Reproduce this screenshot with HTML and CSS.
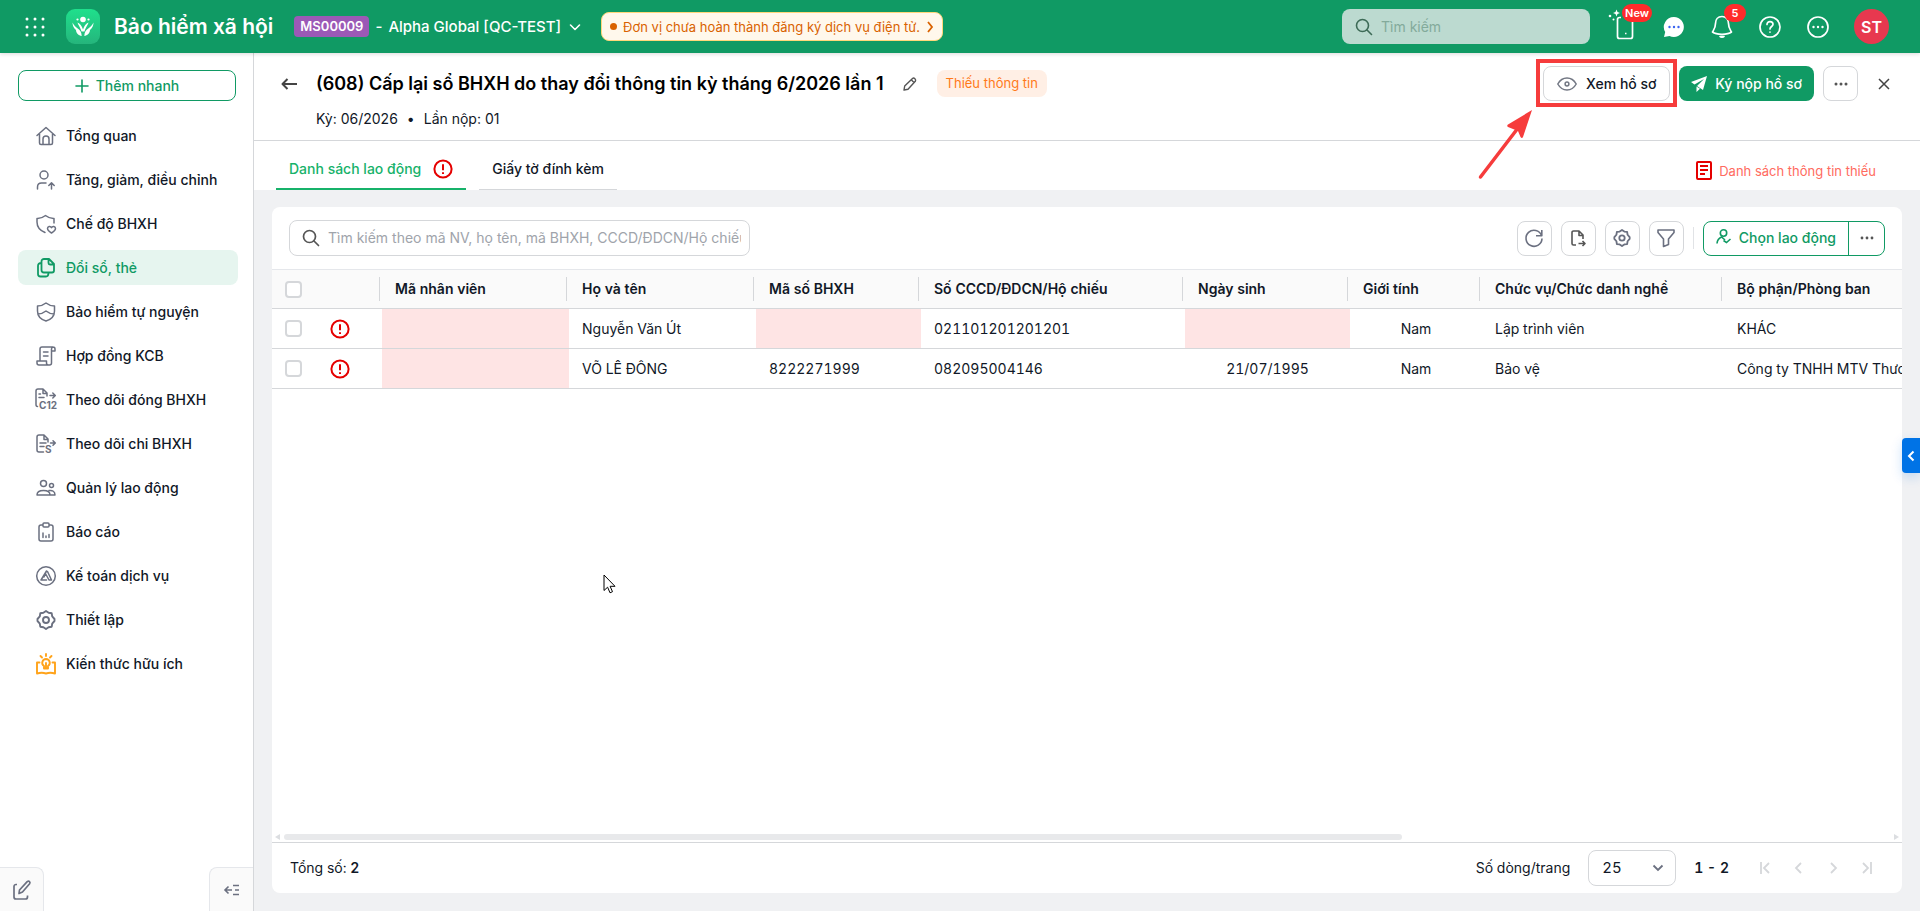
FILE: index.html
```html
<!DOCTYPE html>
<html lang="vi">
<head>
  <meta charset="UTF-8">
  <meta name="viewport" content="width=device-width, initial-scale=1.0">
  <title>Bảo hiểm xã hội</title>
  <link rel="stylesheet" href="styles.css">
</head>
<body>
  <!-- Top bar -->
  <header class="topbar">
    <button class="icon-btn apps" aria-label="Ứng dụng">
      <svg width="20" height="24" viewBox="0 0 20 24" fill="#fff"><circle cx="2" cy="3" r="1.5"/><circle cx="10" cy="3" r="1.5"/><circle cx="18" cy="3" r="1.5"/><circle cx="2" cy="11" r="1.5"/><circle cx="10" cy="11" r="1.5"/><circle cx="18" cy="11" r="1.5"/><circle cx="2" cy="19" r="1.5"/><circle cx="10" cy="19" r="1.5"/><circle cx="18" cy="19" r="1.5"/></svg>
    </button>
    <div class="logo">
      <svg width="22" height="22" viewBox="0 0 22 22" fill="#fff"><circle cx="11" cy="3.500" r="2.800"/><circle cx="5.500" cy="3.500" r="1.100"/><circle cx="16.500" cy="3.500" r="1.100"/><path d="M.5 6.500c1.500 3 3 4.500 5.200 6 2.300 1.600 3.800 3.500 4 7.500-3.200-.8-5.500-2.500-5.700-6C1.800 12 .5 9.500.5 6.500zM21.500 6.500c-1.500 3-3 4.500-5.200 6-2.300 1.600-3.800 3.500-4 7.500 3.200-.8 5.500-2.500 5.700-6 2.200-2 3.500-4.500 3.500-7.500zM5.500 6.500c2.500 1 4.300 3.500 5.500 7 1.200-3.500 3-6 5.500-7-.8 3-2.500 4-4 9h-3c-1.500-5-3.200-6-4-9z"/></svg>
    </div>
    <h1 class="brand">Bảo hiểm xã hội</h1>
    <button class="company">
      <span class="company-code">MS00009</span>
      <span>-</span>
      <span>Alpha Global [QC-TEST]</span>
      <svg width="12" height="12" viewBox="0 0 12 12" fill="none" stroke="#fff" stroke-width="1.600" stroke-linecap="round" stroke-linejoin="round"><path d="M1.500 4l4.500 4.500L10.500 4"/></svg>
    </button>
    <a class="notice" href="#">
      <span class="notice-dot"></span>
      <span>Đơn vị chưa hoàn thành đăng ký dịch vụ điện tử.</span>
      <svg width="8" height="12" viewBox="0 0 8 12" fill="none" stroke="#d96200" stroke-width="1.800"><path d="M2 1l4 5-4 5"/></svg>
    </a>
    <div class="topbar-right">
      <label class="top-search">
        <svg width="18" height="18" viewBox="0 0 18 18" fill="none" stroke="#3d6b57" stroke-width="1.600" stroke-linecap="round"><circle cx="7.500" cy="7.500" r="6"/><path d="M12 12l4.500 4.500"/></svg>
        <input type="text" placeholder="Tìm kiếm" aria-label="Tìm kiếm">
      </label>
      <button class="icon-btn" aria-label="Mới">
        <svg width="28" height="28" viewBox="4 0 28 28" fill="none" stroke="#fff" stroke-width="1.700"><path d="M13 4.500h-1.500a2 2 0 0 0-2 2v17a2 2 0 0 0 2 2h11a2 2 0 0 0 2-2V8M17 20.500h1.500"/><path d="M8.500-3.500l1 2.500L12 0 9.500 1l-1 2.500L7.500 1 5 0l2.500-1z" fill="#fff" stroke="none"/><circle cx="2" cy="3" r="1.300" fill="#fff" stroke="none"/><circle cx="5.500" cy="6.500" r="1" fill="#fff" stroke="none"/></svg>
        <span class="badge badge-new">New</span>
      </button>
      <button class="icon-btn" aria-label="Tin nhắn">
        <svg width="24" height="24" viewBox="0 0 24 24"><path d="M12 2a10 10 0 1 1-4.500 19L2 22l1.200-5A10 10 0 0 1 12 2z" fill="#fff"/><g fill="#3a63f0"><circle cx="7.500" cy="12" r="1.200"/><circle cx="12" cy="12" r="1.200"/><circle cx="16.500" cy="12" r="1.200"/></g></svg>
      </button>
      <button class="icon-btn" aria-label="Thông báo">
        <svg width="24" height="24" viewBox="0 0 24 24" fill="none" stroke="#fff" stroke-width="1.700" stroke-linejoin="round"><path d="M12 1.500c-4.200 0-6.500 3-6.500 7 0 4.500-1.500 6-3 8.500 2 1.600 5.500 2.300 9.500 2.300s7.500-.7 9.500-2.300c-1.500-2.500-3-4-3-8.500 0-4-2.300-7-6.500-7zM10 21.500c.8.900 3.200.9 4 0z"/></svg>
        <span class="badge">5</span>
      </button>
      <button class="icon-btn" aria-label="Trợ giúp">
        <svg width="24" height="24" viewBox="0 0 24 24" fill="none" stroke="#fff" stroke-width="1.700" stroke-linecap="round"><circle cx="12" cy="12" r="10"/><path d="M9 9.500c0-1.700 1.300-2.900 3-2.900s3 1.200 3 2.700c0 2.200-3 2.200-3 4.700M12 17v.1"/></svg>
      </button>
      <button class="icon-btn" aria-label="Khác">
        <svg width="24" height="24" viewBox="0 0 24 24" fill="none" stroke="#fff" stroke-width="1.700"><circle cx="12" cy="12" r="10"/><g fill="#fff" stroke="none"><circle cx="7.500" cy="12" r="1.200"/><circle cx="12" cy="12" r="1.200"/><circle cx="16.500" cy="12" r="1.200"/></g></svg>
      </button>
      <button class="avatar">ST</button>
    </div>
  </header>

  <div class="layout">
    <!-- Sidebar -->
    <aside class="sidebar">
      <button class="btn-add">
        <svg width="14" height="14" viewBox="0 0 14 14" stroke="#109a64" stroke-width="1.600" stroke-linecap="round"><path d="M7 1v12M1 7h12"/></svg>
        Thêm nhanh
      </button>
      <nav class="menu">
        <a class="menu-item" href="#">
          <svg class="menu-icon" viewBox="0 0 20 20"><path d="M1 9.500L10 1.500l9 8M3.500 8v9a1.500 1.500 0 0 0 1.500 1.500h10a1.500 1.500 0 0 0 1.500-1.500V8M7 18v-5a3 3 0 0 1 6 0v5"/></svg>
          Tổng quan
        </a>
        <a class="menu-item" href="#">
          <svg class="menu-icon" viewBox="0 0 20 20"><circle cx="8" cy="5" r="4"/><path d="M1.500 19v-2c0-2.500 1.500-4 4-4H10M15.500 19v-6M12.800 15.500l2.700-2.700 2.700 2.700"/></svg>
          Tăng, giảm, điều chỉnh
        </a>
        <a class="menu-item" href="#">
          <svg class="menu-icon" viewBox="0 0 20 20"><path d="M18 9V4.500c-3.500.2-6-1-8.500-3C7 3.500 4.500 4.700 1 4.500V8c0 5 3 8.500 8 10.500M15.500 19c-2.500-1.600-4-2.800-4-4.500 0-2.200 3-2.800 4-.8 1-2 4-1.400 4 .8 0 1.700-1.500 2.900-4 4.500z"/></svg>
          Chế độ BHXH
        </a>
        <a class="menu-item active" href="#">
          <svg class="menu-icon" viewBox="0 0 20 20"><path d="M8 1h5l5 5v6.500a2 2 0 0 1-2 2H8a2.500 2.500 0 0 1-2.500-2.500V3.500A2.500 2.500 0 0 1 8 1zM12.500 1.500V5a1.500 1.500 0 0 0 1.500 1.500h3.500M5.500 5C3 5 2 6 2 8v8a2.500 2.500 0 0 0 2.500 2.500H10c1.500 0 2.500-1 2.500-4"/></svg>
          Đổi sổ, thẻ
        </a>
        <a class="menu-item" href="#">
          <svg class="menu-icon" viewBox="0 0 20 20"><path d="M10 1c2.500 2 5.500 3 8.500 3v5c0 5-3.500 8.500-8.500 10C5 17.500 1.500 14 1.500 9V4c3 0 6-1 8.500-3zM1.800 12C5 12 7.500 11 10 9c2.500 2 5 3 8.200 3"/></svg>
          Bảo hiểm tự nguyện
        </a>
        <a class="menu-item" href="#">
          <svg class="menu-icon" viewBox="0 0 20 20"><path d="M15.500 5V17a2 2 0 0 1-2 2H3a2 2 0 0 1-2-2v-2h9.500v2a2 2 0 0 0 2 2M4 15V3a2 2 0 0 1 2-2h11a2 2 0 0 1 2 2v2h-3.500V3a2 2 0 0 1 1.500-2M7.500 6H12M7.500 10H12"/></svg>
          Hợp đồng KCB
        </a>
        <a class="menu-item" href="#">
          <svg class="menu-icon" viewBox="0 0 20 20"><path d="M1.500 16.500Q0 16.500 0 14.500V1Q0-1 2-1h5l4 4v3M7-1v4.500h4M3 4h1.500M3 7.500h5M14 5.500h5M16.800 3l2.500 2.500L16.800 8"/><text x="3" y="19">C12</text></svg>
          Theo dõi đóng BHXH
        </a>
        <a class="menu-item" href="#">
          <svg class="menu-icon" viewBox="0 0 20 20"><path d="M7.500 18H3q-2 0-2-2V3Q1 1 3 1h5l4 4v3M8 1v4.500h4M4 9h6M4 12.500h4M14.500 9h4.500M17 6.700l2.300 2.300-2.300 2.300"/><text x="9" y="19">S</text></svg>
          Theo dõi chi BHXH
        </a>
        <a class="menu-item" href="#">
          <svg class="menu-icon" viewBox="0 0 20 20"><circle cx="7.500" cy="5.500" r="3"/><circle cx="15.500" cy="7.500" r="2"/><path d="M1 17c0-3 2.500-4.500 6.500-4.500S14 14 14 17zM13 12.500c3.500-.5 6 1 6 4.500h-5"/></svg>
          Quản lý lao động
        </a>
        <a class="menu-item" href="#">
          <svg class="menu-icon" viewBox="0 0 20 20"><path d="M7 3H5a2 2 0 0 0-2 2v12a2 2 0 0 0 2 2h10a2 2 0 0 0 2-2V5a2 2 0 0 0-2-2h-2M8 1h4a1 1 0 0 1 1 1v2a1 1 0 0 1-1 1H8a1 1 0 0 1-1-1V2a1 1 0 0 1 1-1zM7 11v4.500M10 14v1.500M13 12.500v3"/></svg>
          Báo cáo
        </a>
        <a class="menu-item" href="#">
          <svg class="menu-icon" viewBox="0 0 20 20"><circle cx="10" cy="10" r="9.300"/><path d="M10.500 5L5 14h5.500M10.500 5L8 11M11.500 5.500L15.500 14H13L10 8.500"/></svg>
          Kế toán dịch vụ
        </a>
        <a class="menu-item" href="#">
          <svg class="menu-icon bold" viewBox="0 0 20 20"><path d="M10 1l2.600 1.800 3.100.5.500 3.100L18.500 9v2l-2.300 2.600-.5 3.100-3.100.5L10 19l-2.600-1.800-3.100-.5-.5-3.100L1.500 11V9l2.300-2.600.5-3.100 3.100-.5z"/><circle cx="10" cy="10" r="3"/></svg>
          Thiết lập
        </a>
        <a class="menu-item" href="#">
          <svg class="menu-icon knowledge" viewBox="0 0 20 20"><path d="M3.500 8.500H1v11c3.500-1 6-1 9 0 3-1 5.500-1 9 0v-11h-2.500M10 5a3.800 3.800 0 0 1 2 7v2.500H8V12a3.800 3.800 0 0 1 2-7zM10 0v2M4.500 2L6 3.500M15.500 2L14 3.500M10 9v5"/></svg>
          Kiến thức hữu ích
        </a>
      </nav>
      <div class="sidebar-footer">
        <button class="corner-btn corner-left" aria-label="Góp ý">
          <svg width="18" height="20" viewBox="0 0 18 20" fill="none" stroke="#6b7080" stroke-width="1.700" stroke-linejoin="round"><path d="M4 4.500H3a2 2 0 0 0-2 2V17a2 2 0 0 0 2 2h9.500a2 2 0 0 0 2-2v-1.500M6 13.500l.5-3.500 7.700-8.300c1.800-1.400 3.500.3 2.400 2L9.500 12z"/></svg>
        </button>
        <button class="corner-btn corner-right" aria-label="Thu gọn">
          <svg width="16" height="12" viewBox="0 0 16 12" fill="none" stroke="#6b7080" stroke-width="1.600"><path d="M9 1.500h6M9 10.500h6M1 6h7M11 6h4M4.500 2.500L1 6l3.500 3.500"/></svg>
        </button>
      </div>
    </aside>

    <main class="main">
      <!-- Record header -->
      <section class="record-head">
        <button class="icon-btn back" aria-label="Quay lại">
          <svg width="16" height="12" viewBox="0 0 16 12" fill="none" stroke="#444" stroke-width="2" stroke-linejoin="round"><path d="M16 6H1.500M6.500 1l-5 5 5 5"/></svg>
        </button>
        <div class="record-info">
          <div class="record-title">
            <h2>(608) Cấp lại sổ BHXH do thay đổi thông tin kỳ tháng 6/2026 lần 1</h2>
            <button class="icon-btn edit" aria-label="Sửa">
              <svg width="14" height="14" viewBox="0 0 14 14" fill="none" stroke="#555" stroke-width="1.400" stroke-linejoin="round"><path d="M1 13l.7-4L9.500 1.500c1.500-1.300 4 1 2.800 2.800L5 12.200zM8.500 3l2.500 2.500"/></svg>
            </button>
            <span class="tag">Thiếu thông tin</span>
          </div>
          <p class="record-meta"><span>Kỳ: 06/2026</span><span>•</span><span>Lần nộp: 01</span></p>
        </div>
        <div class="record-actions">
          <div class="highlighted">
            <button class="btn btn-view">
              <svg width="20" height="14" viewBox="0 0 20 14" fill="none" stroke="#737884" stroke-width="1.500"><path d="M.8 7C3 3 6.300 1 10 1s7 2 9.200 6C17 11 13.700 13 10 13S3 11 .8 7z"/><circle cx="10" cy="7" r="1.900"/></svg>
              Xem hồ sơ
            </button>
            <svg class="pointer-arrow" width="56" height="72" viewBox="0 0 56 72"><path d="M2.500 66L40 17" stroke="#f63c3c" stroke-width="3.500" stroke-linecap="round"/><path d="M54-1L45 26q-1 2-2.500 0L40 20l-10-4q-1.500-1.500 0-2.500z" fill="#f63c3c"/></svg>
          </div>
          <button class="btn btn-submit">
            <svg width="16" height="16" viewBox="0 0 16 16" fill="#fff"><path d="M16 0L0 6l3.500 2.500L13 3 6 10l6 4zM5.500 10.500L9 12.800 5.500 16z"/></svg>
            Ký nộp hồ sơ
          </button>
          <button class="square-btn" aria-label="Thêm">
            <svg width="16" height="4" viewBox="0 0 16 4" fill="#555"><circle cx="3" cy="2" r="1.500"/><circle cx="8" cy="2" r="1.500"/><circle cx="13" cy="2" r="1.500"/></svg>
          </button>
          <button class="icon-btn close" aria-label="Đóng">
            <svg width="12" height="12" viewBox="0 0 12 12" stroke="#444" stroke-width="1.500"><path d="M1 1l10 10M11 1L1 11"/></svg>
          </button>
        </div>
      </section>

      <!-- Tabs -->
      <section class="tabs">
        <button class="tab active">
          Danh sách lao động
          <svg class="warn" viewBox="0 0 20 20"><circle cx="10" cy="10" r="8.600"/><path d="M10 5.200v6M10 13.200v1.800"/></svg>
        </button>
        <button class="tab">Giấy tờ đính kèm</button>
        <a class="missing-link" href="#">
          <svg width="16" height="19" viewBox="0 0 16 19" fill="none" stroke="#e50000" stroke-width="2"><rect x="1" y="1" width="14" height="17" rx="1"/><path d="M4 5h8M4 9h8M4 13h5"/></svg>
          Danh sách thông tin thiếu
        </a>
      </section>

      <!-- Employee list -->
      <section class="content">
        <div class="card">
          <div class="toolbar">
            <label class="search">
              <svg width="18" height="18" viewBox="0 0 18 18" fill="none" stroke="#555" stroke-width="1.700" stroke-linecap="round"><circle cx="7.500" cy="7.500" r="6"/><path d="M12 12l4.500 4.500"/></svg>
              <input type="text" placeholder="Tìm kiếm theo mã NV, họ tên, mã BHXH, CCCD/ĐDCN/Hộ chiếu" aria-label="Tìm kiếm nhân viên">
            </label>
            <div class="toolbar-right">
              <button class="square-btn" aria-label="Tải lại">
                <svg class="tool-icon" viewBox="0 0 18 18"><path d="M16.500 6.500A8 8 0 1 0 17 9.500M16.800 1v5.700H11"/></svg>
              </button>
              <button class="square-btn" aria-label="Xuất khẩu">
                <svg class="tool-icon dark" viewBox="0 0 18 18"><path d="M7 16H4.500A1.500 1.500 0 0 1 3 14.500v-11A1.500 1.500 0 0 1 4.500 2H10l4 4v4M10 2v4.500h4M9.500 14.500H16M13.500 12l2.500 2.500-2.500 2.500"/></svg>
              </button>
              <button class="square-btn" aria-label="Thiết lập cột">
                <svg class="tool-icon gear" viewBox="0 0 20 20"><path d="M10 1l2.600 1.800 3.100.5.500 3.100L18.500 9v2l-2.300 2.600-.5 3.100-3.100.5L10 19l-2.600-1.800-3.100-.5-.5-3.100L1.500 11V9l2.300-2.600.5-3.100 3.100-.5z"/><circle cx="10" cy="10" r="3"/></svg>
              </button>
              <button class="square-btn" aria-label="Bộ lọc">
                <svg class="tool-icon" viewBox="0 0 18 18"><path d="M1 1h16v2.500L11.500 10v5.500L6.500 17.500V10L1 3.500z"/></svg>
              </button>
              <span class="divider"></span>
              <div class="split-btn">
                <button class="split-main">
                  <svg width="16" height="18" viewBox="0 0 16 18" fill="none" stroke="#109a64" stroke-width="1.600"><circle cx="7.500" cy="4" r="3.200"/><path d="M1 14.500c.3-3.500 2-5.500 4.500-6.500l3.500 3M7.500 11.500l3 2 4-3.500"/></svg>
                  Chọn lao động
                </button>
                <button class="split-more" aria-label="Thêm">
                  <svg width="16" height="4" viewBox="0 0 16 4" fill="#555"><circle cx="3" cy="2" r="1.400"/><circle cx="8" cy="2" r="1.400"/><circle cx="13" cy="2" r="1.400"/></svg>
                </button>
              </div>
            </div>
          </div>

          <div class="table-wrap">
            <table class="grid">
              <colgroup>
                <col class="col-check"><col class="col-warn"><col class="col-code"><col class="col-name"><col class="col-bhxh"><col class="col-cccd"><col class="col-birth"><col class="col-sex"><col class="col-job"><col class="col-dept">
              </colgroup>
              <thead>
                <tr>
                  <th class="check"><input type="checkbox" aria-label="Chọn tất cả"></th>
                  <th class="sep" aria-label="Cảnh báo"></th>
                  <th class="sep">Mã nhân viên</th>
                  <th class="sep">Họ và tên</th>
                  <th class="sep">Mã số BHXH</th>
                  <th class="sep">Số CCCD/ĐDCN/Hộ chiếu</th>
                  <th class="sep">Ngày sinh</th>
                  <th class="sep">Giới tính</th>
                  <th class="sep">Chức vụ/Chức danh nghề</th>
                  <th>Bộ phận/Phòng ban</th>
                </tr>
              </thead>
              <tbody>
                <tr>
                  <td class="check"><input type="checkbox" aria-label="Chọn Nguyễn Văn Út"></td>
                  <td class="status"><svg class="warn" viewBox="0 0 20 20"><circle cx="10" cy="10" r="8.600"/><path d="M10 5.200v6M10 13.200v1.800"/></svg></td>
                  <td class="missing"></td>
                  <td>Nguyễn Văn Út</td>
                  <td class="missing"></td>
                  <td>021101201201201</td>
                  <td class="missing"></td>
                  <td class="center">Nam</td>
                  <td>Lập trình viên</td>
                  <td>KHÁC</td>
                </tr>
                <tr>
                  <td class="check"><input type="checkbox" aria-label="Chọn VÕ LÊ ĐÔNG"></td>
                  <td class="status"><svg class="warn" viewBox="0 0 20 20"><circle cx="10" cy="10" r="8.600"/><path d="M10 5.200v6M10 13.200v1.800"/></svg></td>
                  <td class="missing"></td>
                  <td>VÕ LÊ ĐÔNG</td>
                  <td>8222271999</td>
                  <td>082095004146</td>
                  <td class="center">21/07/1995</td>
                  <td class="center">Nam</td>
                  <td>Bảo vệ</td>
                  <td>Công ty TNHH MTV Thương</td>
                </tr>
              </tbody>
            </table>
          </div>

          <div class="scrollbar">
            <svg width="5" height="6" viewBox="0 0 5 6" fill="#dcdee1"><path d="M5 0v6L0 3z"/></svg>
            <div class="scroll-track"><div class="scroll-thumb"></div></div>
            <svg width="5" height="6" viewBox="0 0 5 6" fill="#dcdee1"><path d="M0 0v6l5-3z"/></svg>
          </div>

          <div class="card-footer">
            <span>Tổng số: <b>2</b></span>
            <div class="paging">
              <label for="page-size">Số dòng/trang</label>
              <div class="select-wrap">
                <select id="page-size"><option>25</option><option>50</option><option>100</option></select>
                <svg width="12" height="8" viewBox="0 0 12 8" fill="none" stroke="#6b7080" stroke-width="1.800"><path d="M1.500 1.500L6 6l4.500-4.500"/></svg>
              </div>
              <b class="range">1 - 2</b>
              <div class="pager">
                <button class="icon-btn" aria-label="Trang đầu"><svg class="page-icon" viewBox="0 0 12 12"><path d="M2 0v12M10 1L5 6l5 5"/></svg></button>
                <button class="icon-btn" aria-label="Trang trước"><svg class="page-icon" viewBox="0 0 12 12"><path d="M8 1L3 6l5 5"/></svg></button>
                <button class="icon-btn" aria-label="Trang sau"><svg class="page-icon" viewBox="0 0 12 12"><path d="M4 1l5 5-5 5"/></svg></button>
                <button class="icon-btn" aria-label="Trang cuối"><svg class="page-icon" viewBox="0 0 12 12"><path d="M2 1l5 5-5 5M10 0v12"/></svg></button>
              </div>
            </div>
          </div>
        </div>
      </section>
    </main>
  </div>

  <button class="side-handle" aria-label="Mở trợ lý">
    <svg width="8" height="12" viewBox="0 0 8 12" fill="none" stroke="#fff" stroke-width="2"><path d="M6.500 1.500L2 6l4.500 4.500"/></svg>
  </button>
  <svg class="cursor" width="13" height="20" viewBox="0 0 13 20"><path d="M1 1v15.500l3.600-3.300 2.400 5.600 2.500-1.100-2.400-5.400H12z" fill="#fff" stroke="#000" stroke-width="1"/></svg>
</body>
</html>
```
FILE: styles.css
```css
* {
  margin: 0;
  padding: 0;
  box-sizing: border-box;
}

body {
  font-family: Inter, "Liberation Sans", sans-serif;
  font-size: 14px;
  line-height: 20px;
  color: #111827;
  height: 100vh;
  display: flex;
  flex-direction: column;
  overflow: hidden;
  background: white;
}

button,
input,
select {
  font: inherit;
  color: inherit;
}

button {
  background: none;
  border: none;
  cursor: pointer;
}

a {
  color: inherit;
  text-decoration: none;
}

svg {
  flex-shrink: 0;
  overflow: visible;
}

.icon-btn {
  position: relative;
  display: flex;
  align-items: center;
  justify-content: center;
}

/* Top bar */
.topbar {
  height: 53px;
  flex-shrink: 0;
  background: #109a64;
  color: white;
  display: flex;
  align-items: center;
  padding: 0 31px 0 24px;
  box-shadow: 0 1px 4px rgba(0,0,0,0.15);
  z-index: 2;
}

.apps {
  width: 22px;
  margin-right: 20px;
  padding-top: 2px;
}

.logo {
  width: 34px;
  height: 35px;
  border-radius: 9px;
  background: linear-gradient(180deg, #1fe08c 0%, #25b57c 100%);
  display: flex;
  align-items: center;
  justify-content: center;
  margin-right: 14px;
}

.brand {
  font-size: 21px;
  line-height: 28px;
  font-weight: 600;
}

.company {
  display: flex;
  align-items: center;
  gap: 6px;
  margin-left: 21px;
  font-size: 15px;
  font-weight: 500;
}

.company svg {
  margin-left: 2px;
}

.company-code {
  background: #9b59b6;
  border-radius: 4px;
  padding: 0 6px;
  height: 21px;
  font-size: 13px;
  font-weight: 600;
}

.notice {
  display: flex;
  align-items: center;
  gap: 6px;
  margin-left: 20px;
  height: 29px;
  padding: 0 8px;
  border: 1px solid #ffd77a;
  border-radius: 8px;
  background: #fff8ec;
  color: #d96200;
  font-size: 13px;
}

.notice-dot {
  width: 7px;
  height: 7px;
  border-radius: 50%;
  background: #d96200;
}

.topbar-right {
  margin-left: auto;
  display: flex;
  align-items: center;
  gap: 24px;
}

.topbar-right .icon-btn {
  width: 24px;
  height: 24px;
}

.top-search {
  width: 248px;
  height: 35px;
  border-radius: 8px;
  background: #bcdad0;
  display: flex;
  align-items: center;
  gap: 8px;
  padding: 0 13px;
}

.top-search input,
.search input {
  flex: 1;
  min-width: 0;
  border: none;
  outline: none;
  background: none;
}

.top-search input::placeholder {
  color: #83aa9b;
}

.badge {
  position: absolute;
  top: -11px;
  left: 14px;
  min-width: 22px;
  height: 18px;
  border-radius: 9px;
  background: #ff2b2b;
  color: white;
  font-size: 11px;
  line-height: 18px;
  font-weight: 600;
  text-align: center;
}

.badge-new {
  min-width: 30px;
  left: 8px;
}

.avatar {
  width: 35px;
  height: 35px;
  border-radius: 50%;
  background: #e8384f;
  color: white;
  font-size: 16px;
  font-weight: 600;
}

.layout {
  flex: 1;
  min-height: 0;
  display: flex;
}

/* Sidebar */
.sidebar {
  width: 254px;
  flex-shrink: 0;
  border-right: 1px solid #d5d7da;
  display: flex;
  flex-direction: column;
  padding-top: 17px;
}

.btn-add {
  height: 31px;
  margin: 0 17px 0 18px;
  border: 1px solid #109a64;
  border-radius: 8px;
  color: #109a64;
  font-weight: 500;
  display: flex;
  align-items: center;
  justify-content: center;
  gap: 7px;
}

.menu {
  display: flex;
  flex-direction: column;
  gap: 9px;
  padding: 17px 15px 0 18px;
}

.menu-item {
  height: 35px;
  display: flex;
  align-items: center;
  gap: 10px;
  padding-left: 18px;
  border-radius: 8px;
  font-weight: 500;
}

.menu-item.active {
  background: #e6f5ef;
  color: #109a64;
}

.menu-icon {
  width: 20px;
  height: 20px;
  fill: none;
  stroke: #6b7080;
  stroke-width: 1.5;
  stroke-linecap: round;
  stroke-linejoin: round;
}

.menu-icon.bold {
  stroke-width: 1.9;
}

.menu-icon text {
  fill: #6b7080;
  stroke: none;
  font-size: 10px;
  font-weight: 700;
}

.menu-item.active .menu-icon {
  stroke: #109a64;
  stroke-width: 1.8;
}

.menu-icon.knowledge {
  stroke: #ffa31a;
  stroke-width: 1.9;
}

.sidebar-footer {
  margin-top: auto;
  display: flex;
  justify-content: space-between;
}

.corner-btn {
  width: 44px;
  height: 44px;
  border: 1px solid #e5e7eb;
  border-bottom: none;
  background: #fafafa;
  display: flex;
  align-items: center;
  justify-content: center;
}

.corner-left {
  border-left: none;
  border-radius: 0 8px 0 0;
}

.corner-right {
  border-right: none;
  border-radius: 8px 0 0 0;
}

.main {
  flex: 1;
  min-width: 0;
  display: flex;
  flex-direction: column;
  background: #f0f1f3;
}

/* Record header */
.record-head {
  background: white;
  height: 88px;
  flex-shrink: 0;
  border-bottom: 1px solid #d5d7da;
  display: flex;
  align-items: flex-start;
  padding: 13px 28px 0 27px;
}

.back,
.close {
  width: 16px;
  height: 35px;
}

.record-info {
  margin-left: 19px;
}

.record-title {
  display: flex;
  align-items: center;
  height: 35px;
}

.record-title h2 {
  font-size: 18px;
  line-height: 24px;
  font-weight: 600;
  color: black;
}

.edit {
  margin-left: 19px;
}

.tag {
  margin-left: 20px;
  height: 27px;
  line-height: 27px;
  padding: 0 9px;
  border-radius: 8px;
  background: #ffefe5;
  color: #ff7a1a;
  font-size: 13px;
}

.record-meta {
  display: flex;
  gap: 9px;
  margin-top: 8px;
}

.record-actions {
  margin-left: auto;
  display: flex;
  align-items: center;
  gap: 9px;
}

.btn {
  height: 35px;
  display: flex;
  align-items: center;
  border-radius: 8px;
  font-weight: 500;
}

.btn-view {
  width: 127px;
  justify-content: center;
  gap: 9px;
  border: 1px solid #d5d7da;
  background: white;
}

.btn-submit {
  background: #109a64;
  color: white;
  gap: 8px;
  padding: 0 12px;
}

.highlighted {
  position: relative;
}

.highlighted::after {
  content: "";
  position: absolute;
  inset: -7px -7px -6px -7px;
  border: 4px solid #f63c3c;
  pointer-events: none;
}

.pointer-arrow {
  position: absolute;
  top: 45px;
  left: -65px;
  pointer-events: none;
}

.square-btn {
  width: 35px;
  height: 35px;
  border: 1px solid #d5d7da;
  border-radius: 8px;
  background: white;
  display: flex;
  align-items: center;
  justify-content: center;
}

.close {
  margin-left: 9px;
}

/* Tabs */
.tabs {
  background: white;
  height: 49px;
  flex-shrink: 0;
  display: flex;
  align-items: flex-end;
  gap: 13px;
  padding: 0 44px 0 22px;
}

.tab {
  height: 41px;
  padding: 0 13px;
  border-bottom: 1px solid #d5d7da;
  font-weight: 500;
  display: flex;
  align-items: center;
  gap: 12px;
}

.tab.active {
  color: #17b26a;
  border-bottom: 2px solid #17b26a;
}

.warn {
  width: 20px;
  height: 20px;
  fill: none;
  stroke: #e50000;
  stroke-width: 2;
}

.missing-link {
  margin-left: auto;
  align-self: center;
  display: flex;
  align-items: center;
  gap: 7px;
  padding-top: 10px;
  color: #ff6b60;
  font-size: 13px;
}

/* Employee list */
.content {
  flex: 1;
  min-height: 0;
  padding: 17px 18px 18px;
  display: flex;
}

.card {
  flex: 1;
  min-width: 0;
  background: white;
  border-radius: 8px;
  display: flex;
  flex-direction: column;
}

.toolbar {
  display: flex;
  align-items: center;
  justify-content: space-between;
  padding: 13px 17px;
}

.search {
  width: 461px;
  height: 36px;
  border: 1px solid #d5d7da;
  border-radius: 8px;
  display: flex;
  align-items: center;
  gap: 8px;
  padding: 0 8px 0 12px;
}

.search input::placeholder {
  color: #a0a4ab;
}

.toolbar-right {
  display: flex;
  align-items: center;
  gap: 9px;
}

.tool-icon {
  width: 18px;
  height: 18px;
  fill: none;
  stroke: #6b7080;
  stroke-width: 1.6;
  stroke-linejoin: round;
}

.tool-icon.gear {
  stroke-width: 2;
}

.tool-icon.dark {
  stroke: #555;
}

.divider {
  width: 1px;
  height: 22px;
  background: #e1e3e6;
}

.split-btn {
  height: 35px;
  border: 1px solid #109a64;
  border-radius: 8px;
  display: flex;
}

.split-main {
  display: flex;
  align-items: center;
  gap: 7px;
  padding: 0 12px;
  color: #109a64;
  font-weight: 500;
  border-right: 1px solid #109a64;
}

.split-more {
  width: 35px;
  display: flex;
  align-items: center;
  justify-content: center;
}

.table-wrap {
  flex: 1;
  min-height: 0;
  overflow: hidden;
}

.grid {
  width: 1700px;
  table-layout: fixed;
  border-collapse: separate;
  border-spacing: 0;
  font-variant-numeric: tabular-nums;
}

.col-check { width: 43px; }
.col-warn { width: 67px; }
.col-code { width: 187px; }
.col-name { width: 187px; }
.col-bhxh { width: 165px; }
.col-cccd { width: 264px; }
.col-birth { width: 165px; }
.col-sex { width: 132px; }
.col-job { width: 242px; }

.grid th {
  position: relative;
  height: 40px;
  padding: 0 13px;
  background: #fafafa;
  border-top: 1px solid #e5e7eb;
  border-bottom: 1px solid #d5d7da;
  font-weight: 600;
  text-align: left;
  white-space: nowrap;
}

.sep::after {
  content: "";
  position: absolute;
  top: 7px;
  right: 2px;
  width: 1px;
  height: 24px;
  background: #d5d7da;
}

.grid td {
  height: 40px;
  padding: 0 13px;
  border-bottom: 1px solid #d5d7da;
  white-space: nowrap;
}

.grid td.missing {
  background: #fee4e4;
}

.grid td.center {
  text-align: center;
}

.grid .check,
.grid .status {
  padding: 0;
  text-align: center;
}

.grid .status {
  padding-right: 17px;
}

.grid .check input,
.grid .warn {
  display: block;
  margin: 0 auto;
}

.grid .check input {
  appearance: none;
  width: 17px;
  height: 17px;
  border: 2px solid #d5d7da;
  border-radius: 4px;
  background: white;
}

.scrollbar {
  display: flex;
  align-items: center;
  gap: 4px;
  height: 9px;
  padding: 0 3px;
  margin-bottom: 1px;
}

.scroll-track {
  flex: 1;
}

.scroll-thumb {
  width: 69.6%;
  height: 6px;
  border-radius: 3px;
  background: #e8e9eb;
}

.card-footer {
  height: 51px;
  border-top: 1px solid #d5d7da;
  display: flex;
  align-items: center;
  justify-content: space-between;
  padding: 0 29px 0 18px;
  font-variant-numeric: tabular-nums;
}

.card-footer b {
  font-weight: 600;
}

.paging {
  display: flex;
  align-items: center;
  gap: 18px;
}

.select-wrap {
  position: relative;
  width: 88px;
  height: 36px;
}

.select-wrap select {
  appearance: none;
  width: 100%;
  height: 100%;
  padding: 0 13px;
  border: 1px solid #d5d7da;
  border-radius: 8px;
  background: white;
  font-size: 15px;
  font-variant-numeric: tabular-nums;
}

.select-wrap svg {
  position: absolute;
  right: 12px;
  top: 14px;
  pointer-events: none;
}

.pager {
  display: flex;
  gap: 22px;
  margin-left: 12px;
}

.page-icon {
  width: 12px;
  height: 12px;
  fill: none;
  stroke: #d5d7da;
  stroke-width: 1.8;
}

/* Floating parts */
.side-handle {
  position: fixed;
  right: 0;
  top: 438px;
  width: 18px;
  height: 35px;
  border-radius: 4px 0 0 4px;
  background: #0073e6;
  box-shadow: 0 4px 12px rgba(0,115,230,0.2);
  display: flex;
  align-items: center;
  justify-content: center;
}

.cursor {
  position: fixed;
  left: 603px;
  top: 574px;
  pointer-events: none;
}
```
